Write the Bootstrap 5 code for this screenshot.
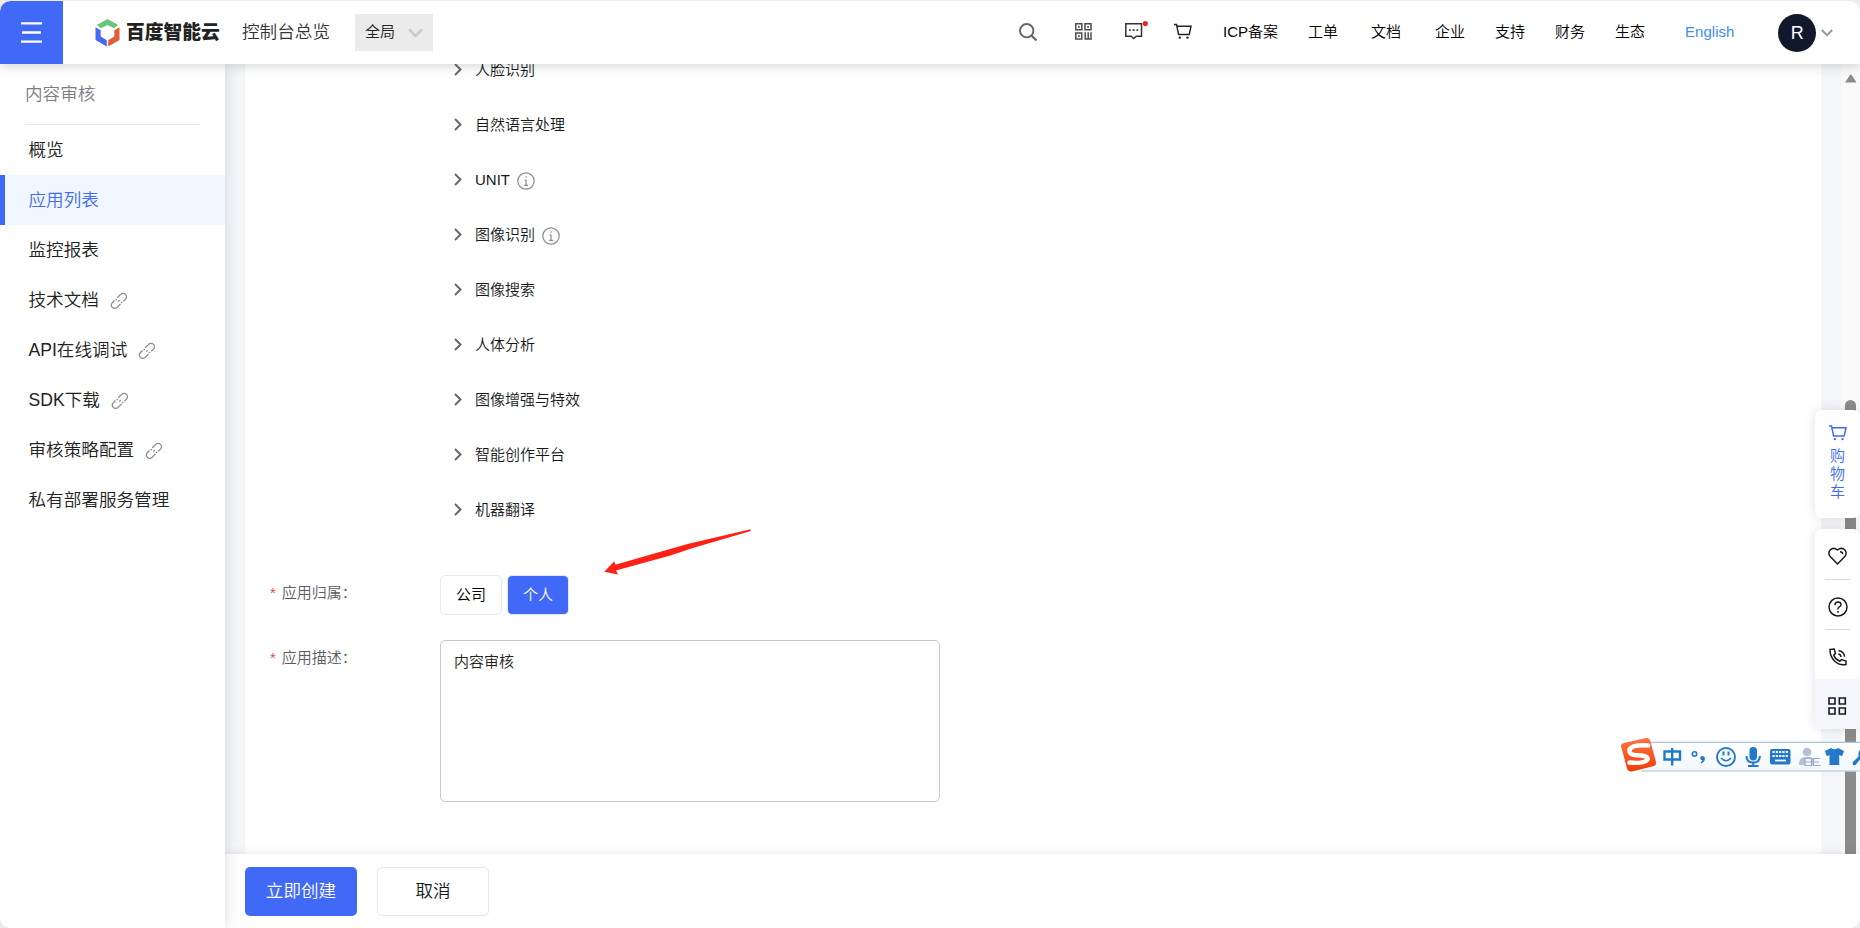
<!DOCTYPE html>
<html lang="zh-CN">
<head>
<meta charset="utf-8">
<title>控制台总览</title>
<link href="https://cdn.jsdelivr.net/npm/bootstrap@5.3.0/dist/css/bootstrap.min.css" rel="stylesheet">
<style>
:root{--brand:#4169f7}
html{background:#ececec}
body{font-family:"Liberation Sans","Noto Sans CJK SC",sans-serif;font-size:15px;font-weight:350;line-height:24px;color:#000;height:928px;background:#ececec}
svg{display:block;flex:none;overflow:visible}
.window{height:928px;padding-top:1px;background:#ececec}
.frame{height:927px;border-radius:10px;background:#fff}
.topbar{height:63px;z-index:5;background:#fff;box-shadow:0 2px 12px rgba(30,50,45,.2);border-radius:10px 10px 0 0;padding:0;flex-wrap:nowrap}
.burger{width:63px;height:63px;background:var(--brand);border-radius:10px 0 0 0}
.burger svg{margin-top:-1px}
.brandname{font-size:18.8px;font-weight:900;color:#222;margin-left:6px;width:94px;white-space:nowrap}
.console{font-size:17.6px;color:#333;margin-left:22px;width:89px;white-space:nowrap}
.region{width:78px;height:37px;background:#ebebeb;margin-left:24px;padding:0 10px;color:#222}
.tools{margin-left:586px;white-space:nowrap}
.tools>svg,.tools>span,.console,.region span{margin-top:-2px}
.avatar{width:38px;height:38px;background:#12182b;color:#fff;font-size:18px;margin-left:44px;margin-right:5px}
.side{width:225px;z-index:3;background:#fff;box-shadow:0 0 16px rgba(0,0,0,.14);font-size:17.6px;border-radius:0 0 0 10px}
.side-title{height:61px;margin:0 25px;width:175px;border-bottom:1px solid #e6e8ee;color:#7d7e82}
.side .item{height:50px;padding-left:28.500px;color:#222;white-space:nowrap}
.side .item.on{background:#f1f7ff;color:var(--brand);border-left:5px solid var(--brand);padding-left:23.500px}
.side svg{margin:2px 0 0 11px}
.work{background:#f5f6fa}
.panel{margin-left:20px;width:1576px;background:#fff}
.svc{margin-top:-22px;padding-left:209px}
.svc .line{height:55px}
.svc .line span{margin-left:13px;color:#151821}
.svc .line span+svg{margin:3px 0 0 7px}
.lab{width:195px;padding-left:25px;padding-top:6px;color:#5b5d63;white-space:nowrap}
.lab b{color:#e8503a;font-weight:400;margin-right:6px}
.opt{height:40px;border:1px solid #e8e9eb;border-radius:5px;background:#fff;width:62px}
.opt.on{background:var(--brand);color:#fff;border:1px solid #e4e9fb}
.desc{width:500px;height:162px;border:1px solid #c8c8ca;border-radius:5px;padding:9px 13px;color:#222}
.foot{height:74px;z-index:2;background:#fff;box-shadow:0 -1px 8px rgba(0,0,0,.09);padding:13px 20px 0;border-radius:0 0 10px 0}
.act{width:112px;height:49px;font-size:17.6px;font-weight:350;border-radius:5px;padding:0 0 1px}
.act.go{background:var(--brand);color:#fff}
.act.no{border:1px solid #e6e7ea;color:#151821;background:#fff}
.track{width:19px;background:#fafafb}
.thumb{width:11px;height:460px;margin:0 4px;background:#8b8b8b;border-radius:6px}
.dock{right:0;z-index:6;width:45px;background:#fff;border-radius:6px;box-shadow:0 0 12px rgba(0,0,0,.12)}
.dock .cell{height:50px;padding-top:4px}
.dock hr{width:25px;margin:0 auto;border-color:#d9dade;opacity:1}
.cart{top:410px;height:108px;color:var(--brand);line-height:17.800px;padding-top:14px}
.cart div{padding-top:5px}
.more{top:529px;height:200px}
.ime{left:1621px;top:737px;width:239px;height:37px;z-index:8;overflow:hidden}
.pointer{left:600px;top:526px;z-index:4}
</style>
</head>
<body class="overflow-hidden">
<svg width="0" height="0" class="position-absolute">
  <symbol id="chev" viewBox="0 0 8 13"><path d="M1 1l5.500 5.500L1 12" fill="none" stroke="#666870" stroke-width="2"/></symbol>
  <symbol id="link" viewBox="0 0 18 18"><g fill="none" stroke="#8b8c90" stroke-width="1.300"><path d="M7.200 5.800l3.400-3.400a3.300 3.300 0 0 1 4.900 0a3.300 3.300 0 0 1 0 4.700L13.300 9.300M10.500 12l-3.400 3.400a3.300 3.300 0 0 1-4.800 0a3.300 3.300 0 0 1 0-4.700L4.500 8.500"/><path d="M5.500 7.500L7 7.600M8.200 9.600l1.400-1.400M10.800 10.300l1.500.2"/></g></symbol>
  <symbol id="info" viewBox="0 0 18 18"><circle cx="9" cy="9" r="8.200" fill="none" stroke="#8c8d91" stroke-width="1.200"/><path d="M9 4.200v1.600M7.500 8H9v5M7 13.300h4" fill="none" stroke="#8c8d91" stroke-width="1.200"/></symbol>
  <symbol id="trolley" viewBox="0 0 18 17"><path d="M0 1.500h2.500L4.600 11.600h10.600L17 3.300H3M4 9.800" fill="none" stroke="currentColor" stroke-width="1.500"/><circle cx="5.800" cy="14.600" r="1.200" fill="currentColor"/><circle cx="13.500" cy="14.600" r="1.200" fill="currentColor"/></symbol>
</svg>
<div class="window position-relative">
<div class="frame d-flex flex-column overflow-hidden">
  <header class="topbar navbar d-flex align-items-center justify-content-start position-relative">
    <div class="burger d-flex align-items-center justify-content-center"><svg width="21" height="21"><path d="M0 1.300h21M1 10.500h19M0 19.700h21" stroke="#fff" stroke-width="2.300"/></svg></div>
    <svg width="25" height="28" style="margin-left:32px" viewBox="0 0 25 28"><path d="M12.500 0L23.200 6.100L19 9.300L12.500 6L6 9.300L1.800 6.100z" fill="#68c57c"/><path d="M.5 8.200L5.700 11.200V17.500L11.800 21.300V27.600L.5 21z" fill="#4668f2"/><path d="M24.500 8.200L19.300 11.200V17.500L13.200 21.300V27.600L24.500 21z" fill="#e35c38"/></svg>
    <div class="brandname">百度智能云</div>
    <div class="console">控制台总览</div>
    <div class="region d-flex align-items-center justify-content-between"><span>全局</span><svg width="15" height="10"><path d="M1.200 1.500l6.300 6.300l6.300-6.300" fill="none" stroke="#cacaca" stroke-width="2.600"/></svg></div>
    <div class="tools d-flex align-items-center">
      <svg width="18" height="18"><circle cx="7.700" cy="7.700" r="6.700" fill="none" stroke="#666" stroke-width="1.900"/><path d="M12.500 12.500l5 5" stroke="#666" stroke-width="2.200"/></svg>
      <svg width="17" height="17" style="margin-left:38px"><g fill="none" stroke="#4c4c4c" stroke-width="1.500"><path d="M.8.800h6v6h-6zM10 .8h6v6h-6zM.8 10h6v6h-6zM10.200 9.300v6.700M13.200 9.300v6.700M16 9.300v6.700M9.500 16h7.300"/></g><path d="M3 3h1.700v1.700H3zM12.200 3h1.700v1.700h-1.700zM3 12.200h1.700v1.700H3z" fill="#4c4c4c"/></svg>
      <svg width="18" height="17" style="margin-left:33px"><path d="M.8.800h15.700v12.500h-5.300l-2.500 2.200l-2.500-2.200H.8z" fill="none" stroke="#333" stroke-width="1.500"/><path d="M4 7.200h1.700M7.700 7.200h1.900M11.500 7.200h1.700" stroke="#333" stroke-width="1.700"/><circle cx="20.300" cy=".6" r="2.600" fill="#e12b2b"/></svg>
      <svg width="18" height="17" class="text-dark" style="margin-left:31px"><use href="#trolley"/></svg>
      <span style="margin-left:31px">ICP备案</span>
      <span style="margin-left:30px">工单</span>
      <span style="margin-left:33px">文档</span>
      <span style="margin-left:34px">企业</span>
      <span style="margin-left:30px">支持</span>
      <span style="margin-left:30px">财务</span>
      <span style="margin-left:30px">生态</span>
      <span style="margin-left:40px;color:#448cf0">English</span>
      <div class="avatar rounded-circle d-flex align-items-center justify-content-center">R</div>
      <svg width="12" height="8"><path d="M.8 2l5.200 5.200L11.200 2" fill="none" stroke="#999" stroke-width="2"/></svg>
    </div>
  </header>
  <div class="d-flex flex-grow-1" style="min-height:0">
    <aside class="side position-relative flex-shrink-0">
      <div class="side-title d-flex align-items-center">内容审核</div>
      <div class="item d-flex align-items-center">概览</div>
      <div class="item on d-flex align-items-center">应用列表</div>
      <div class="item d-flex align-items-center">监控报表</div>
      <div class="item d-flex align-items-center">技术文档<svg width="18" height="18"><use href="#link"/></svg></div>
      <div class="item d-flex align-items-center">API在线调试<svg width="18" height="18"><use href="#link"/></svg></div>
      <div class="item d-flex align-items-center">SDK下载<svg width="18" height="18"><use href="#link"/></svg></div>
      <div class="item d-flex align-items-center">审核策略配置<svg width="18" height="18"><use href="#link"/></svg></div>
      <div class="item d-flex align-items-center">私有部署服务管理</div>
    </aside>
    <div class="d-flex flex-column flex-grow-1">
      <main class="work d-flex justify-content-between overflow-hidden" style="height:790px">
        <section class="panel">
          <div class="svc">
            <div class="line d-flex align-items-center"><svg width="8" height="13"><use href="#chev"/></svg><span>人脸识别</span></div>
            <div class="line d-flex align-items-center"><svg width="8" height="13"><use href="#chev"/></svg><span>自然语言处理</span></div>
            <div class="line d-flex align-items-center"><svg width="8" height="13"><use href="#chev"/></svg><span>UNIT</span><svg width="18" height="18"><use href="#info"/></svg></div>
            <div class="line d-flex align-items-center"><svg width="8" height="13"><use href="#chev"/></svg><span>图像识别</span><svg width="18" height="18"><use href="#info"/></svg></div>
            <div class="line d-flex align-items-center"><svg width="8" height="13"><use href="#chev"/></svg><span>图像搜索</span></div>
            <div class="line d-flex align-items-center"><svg width="8" height="13"><use href="#chev"/></svg><span>人体分析</span></div>
            <div class="line d-flex align-items-center"><svg width="8" height="13"><use href="#chev"/></svg><span>图像增强与特效</span></div>
            <div class="line d-flex align-items-center"><svg width="8" height="13"><use href="#chev"/></svg><span>智能创作平台</span></div>
            <div class="line d-flex align-items-center"><svg width="8" height="13"><use href="#chev"/></svg><span>机器翻译</span></div>
          </div>
          <div class="d-flex" style="margin-top:38px">
            <div class="lab"><b>*</b>应用归属：</div>
            <div class="opt d-flex align-items-center justify-content-center">公司</div>
            <div class="opt on d-flex align-items-center justify-content-center" style="margin-left:5px">个人</div>
          </div>
          <div class="d-flex" style="margin-top:25px">
            <div class="lab"><b>*</b>应用描述：</div>
            <div class="desc">内容审核</div>
          </div>
        </section>
        <div class="track">
          <svg width="12" height="9" style="margin:10px 0 0 4px"><path d="M0 8.500L5 .9q.8-.9 1.600 0l5 7.600z" fill="#8b8b8b"/></svg>
          <div class="thumb" style="margin-top:317px"></div>
        </div>
      </main>
      <footer class="foot position-relative d-flex">
        <button class="btn act go">立即创建</button>
        <button class="btn act no" style="margin-left:20px">取消</button>
      </footer>
    </div>
  </div>
</div>

<svg class="pointer position-absolute" width="156" height="54"><path d="M4.300 45.800L14.300 35.300L15.300 38.700L50 28.800L87.600 18L149.500 3.500Q152 3.800 150 5.200L94.500 21.500L70.400 29.600L16 44.500L18 48.500z" fill="#ff2116"/></svg>

<div class="dock cart position-absolute d-flex flex-column align-items-center">
  <svg width="18" height="18"><use href="#trolley"/></svg>
  <div class="text-center">购<br>物<br>车</div>
</div>
<div class="dock more position-absolute overflow-hidden">
  <div class="cell d-flex align-items-center justify-content-center"><svg width="19" height="18"><path d="M9.500 17L2.200 9.600Q-.5 6 2.200 3Q5.500-.2 9.500 3Q13.500-.2 16.800 3Q19.500 6 16.800 9.600z" fill="none" stroke="#171b27" stroke-width="1.500"/><path d="M12 4.700q2.700 0 2.800 2.600" fill="none" stroke="#171b27" stroke-width="1.400"/></svg></div>
  <hr>
  <div class="cell d-flex align-items-center justify-content-center" style="height:49px"><svg width="20" height="20"><circle cx="10" cy="10" r="9" fill="none" stroke="#171b27" stroke-width="1.500"/><path d="M7 8q0-3 3-3t3 2.600q0 1.500-1.700 2.300T10 12.500M10 14v1.700" fill="none" stroke="#171b27" stroke-width="1.500"/></svg></div>
  <hr>
  <div class="cell d-flex align-items-center justify-content-center" style="height:49px"><svg width="18" height="18"><g fill="none" stroke="#171b27" stroke-width="1.500"><path d="M1 1.500L5.200 1L6.500 5.500L4.700 7.200Q6.500 11.500 10.800 13.300L12.500 11.500L17 13v3.500Q10.500 17.800 5.500 13Q.8 8 1 1.500z"/><path d="M9.300 6q2.500.2 2.700 3M9.500 2.800q5.500.4 6 6"/></g></svg></div>
  <div class="cell d-flex align-items-center justify-content-center" style="background:#f5f6fa"><svg width="19" height="19"><path d="M1 1h6v6H1zM11.300 1h6v6h-6zM1 11h6v6H1zM11.300 11h6v6h-6z" fill="none" stroke="#171b27" stroke-width="1.600"/></svg></div>
</div>

<div class="ime position-absolute">
<svg width="239" height="37">
  <defs><linearGradient id="bar" x2="0" y2="1"><stop stop-color="#fff"/><stop offset="1" stop-color="#f3f8fc"/></linearGradient><linearGradient id="hot" x2="0" y2="1"><stop stop-color="#ff7440"/><stop offset="1" stop-color="#ee3d08"/></linearGradient></defs>
  <path d="M20 5h219v29H20z" fill="url(#bar)"/><path d="M20 5.300h219" stroke="#a8c4d8" stroke-width="1.300"/><path d="M20 34h219" stroke="#c6d5e0" stroke-width="1.500"/>
  <path d="M3 6L25 1q3-.5 4 2l6 22q.5 3-2 4L11 34.500q-4 .5-5-3L0 9q0-2.500 3-3z" fill="url(#hot)"/>
  <path d="M27 8.500Q12 7 8.500 12.500Q7.500 18 16 18.300Q27 18.500 26.500 22Q25 27 8.500 25.500" fill="none" stroke="#fff" stroke-width="4.500" stroke-linecap="round"/>
  <g fill="none" stroke="#2278cb" stroke-width="2.400">
    <path d="M43.500 14.500h15.500v8H43.500zM51.200 11v17.500"/>
    <circle cx="73.500" cy="17" r="2.200" stroke-width="1.600"/>
    <circle cx="105" cy="20" r="9" stroke-width="1.900"/><path d="M102.500 14.500v4M107.500 14.500v4" stroke-width="2"/><path d="M100 21q5 5.500 10 0" stroke-width="1.600"/>
    <path d="M125.500 19q0 6.500 6.700 6.500t6.700-6.500M132.200 25v4M127 29h10.500" stroke-width="2"/>
  </g>
  <g fill="#2278cb"><path d="M79.500 19.500q3-1.500 4.300 1q.8 3.800-3.500 6l-.7-1q2-1.200 1.800-2.200q-2.700-.2-1.900-3.800z"/><rect x="128.500" y="10" width="7.500" height="13.500" rx="3.700"/><rect x="149" y="12" width="20.500" height="15.500" rx="2"/><path d="M204 14l6-3q3.500 2.500 7 0l6 3l-1.800 5l-3-.8V28h-9.700v-9.800l-3 .8z"/><path d="M231.500 25.500l6-6q-.5-5 2-7.500V22l-5 6q-3 1-3-2.500z"/></g>
  <path d="M151.500 15h15.500M151.500 19h15.500" stroke="#fff" stroke-width="2" stroke-dasharray="2.200 1.100"/><path d="M154 23.500h11" stroke="#fff" stroke-width="1.800"/>
  <g fill="#b4c0d8"><circle cx="186" cy="15" r="4.300"/><path d="M178 28q0-7.500 5.500-8h5q5 .5 5.500 8z"/></g>
  <path d="M184 21.500h6.500v7H184zM199 21.500h-6.500v7h7M184 25h14" fill="#f6f9fc" stroke="#9aabc9" stroke-width="1.200"/>
</svg>
</div>
</div>
<script src="https://cdn.jsdelivr.net/npm/bootstrap@5.3.0/dist/js/bootstrap.bundle.min.js"></script>
</body>
</html>
